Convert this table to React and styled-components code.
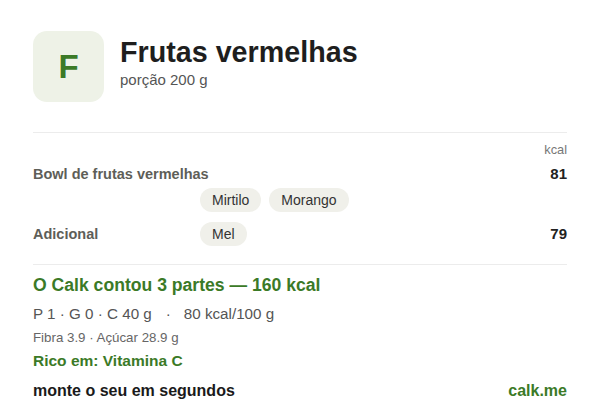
import React from "react";
import styled, { createGlobalStyle } from "styled-components";

const Global = createGlobalStyle`
  html, body { margin: 0; padding: 0; background: #ffffff; }
  body { font-family: "Liberation Sans", Arial, sans-serif; }
`;

const Card = styled.div`
  width: 600px;
  height: 413px;
  box-sizing: border-box;
  padding: 31px 33px 0 33px;
  display: flex;
  flex-direction: column;
  background: #fff;
  overflow: hidden;
`;

const Header = styled.header`
  display: flex;
  align-items: flex-start;
  gap: 16px;
`;

const Logo = styled.div`
  width: 71px;
  height: 71px;
  border-radius: 14px;
  background: #eef2e7;
  display: flex;
  align-items: center;
  justify-content: center;
  color: #3b7a27;
  font-weight: 700;
  font-size: 33px;
  flex-shrink: 0;
`;

const TitleBlock = styled.div`
  display: flex;
  flex-direction: column;
  margin-top: 5px;
`;

const Title = styled.h1`
  margin: 0;
  font-size: 28.7px;
  line-height: 32px;
  font-weight: 700;
  color: #1e1e1e;
`;

const Subtitle = styled.div`
  margin-top: 3px;
  font-size: 15px;
  line-height: 18px;
  color: #555;
`;

const Divider = styled.hr`
  margin: ${(p) => p.$top}px 0 0 0;
  border: 0;
  height: 1px;
  background: #ececec;
  width: 100%;
`;

const UnitHead = styled.div`
  margin-top: 9px;
  text-align: right;
  font-size: 12.8px;
  line-height: 16px;
  color: #777;
`;

const ItemRow = styled.div`
  display: grid;
  grid-template-columns: 167px 1fr auto;
  align-items: center;
  row-gap: 5px;
  margin-top: ${(p) => p.$top}px;
`;

const ItemName = styled.div`
  grid-column: ${(p) => (p.$wide ? "1 / 3" : "1 / 2")};
  grid-row: 1;
  font-size: 14.5px;
  line-height: 18px;
  font-weight: 700;
  color: #5e5e58;
`;

const Kcal = styled.div`
  grid-column: 3;
  grid-row: 1;
  font-size: 15px;
  line-height: 18px;
  font-weight: 700;
  color: #222;
  text-align: right;
`;

const Chips = styled.div`
  grid-column: 2;
  grid-row: ${(p) => (p.$below ? 2 : 1)};
  display: flex;
  flex-wrap: wrap;
  gap: 8px;
`;

const Chip = styled.span`
  display: inline-flex;
  align-items: center;
  height: 24px;
  padding: 0 12px;
  border-radius: 12px;
  background: #f0f0ea;
  color: #333;
  font-size: 14px;
`;

const Summary = styled.div`
  margin-top: 9px;
  font-size: 17.6px;
  line-height: 22px;
  font-weight: 700;
  color: #3b7a27;
`;

const Macros = styled.div`
  margin-top: 8px;
  display: flex;
  align-items: center;
  font-size: 15.2px;
  line-height: 20px;
  color: #555;
`;

const Sep = styled.span`
  margin: 0 13px 0 14px;
`;

const Extra = styled.div`
  margin-top: 6px;
  font-size: 13.3px;
  line-height: 16px;
  color: #666;
`;

const Rich = styled.div`
  margin-top: 5px;
  font-size: 15.5px;
  line-height: 20px;
  font-weight: 700;
  color: #3b7a27;
`;

const Footer = styled.div`
  margin-top: 10px;
  display: flex;
  justify-content: space-between;
  align-items: center;
  font-size: 16px;
  line-height: 20px;
  font-weight: 700;
`;

const Cta = styled.span`
  color: #1a1a1a;
`;

const Brand = styled.span`
  color: #3b7a27;
`;

const items = [
  { name: "Bowl de frutas vermelhas", kcal: 81, chips: ["Mirtilo", "Morango"], wide: true, top: 7 },
  { name: "Adicional", kcal: 79, chips: ["Mel"], wide: false, top: 10 },
];

export default function App() {
  return (
    <>
      <Global />
      <Card>
        <Header>
          <Logo>F</Logo>
          <TitleBlock>
            <Title>Frutas vermelhas</Title>
            <Subtitle>porção 200 g</Subtitle>
          </TitleBlock>
        </Header>
        <Divider $top={30} />
        <UnitHead>kcal</UnitHead>
        {items.map((it) => (
          <ItemRow key={it.name} $top={it.top}>
            <ItemName $wide={it.wide}>{it.name}</ItemName>
            <Kcal>{it.kcal}</Kcal>
            <Chips $below={it.wide}>
              {it.chips.map((c) => (
                <Chip key={c}>{c}</Chip>
              ))}
            </Chips>
          </ItemRow>
        ))}
        <Divider $top={18} />
        <Summary>O Calk contou 3 partes — 160 kcal</Summary>
        <Macros>
          <span>P 1 · G 0 · C 40 g</span>
          <Sep>·</Sep>
          <span>80 kcal/100 g</span>
        </Macros>
        <Extra>Fibra 3.9 · Açúcar 28.9 g</Extra>
        <Rich>Rico em: Vitamina C</Rich>
        <Footer>
          <Cta>monte o seu em segundos</Cta>
          <Brand>calk.me</Brand>
        </Footer>
      </Card>
    </>
  );
}
